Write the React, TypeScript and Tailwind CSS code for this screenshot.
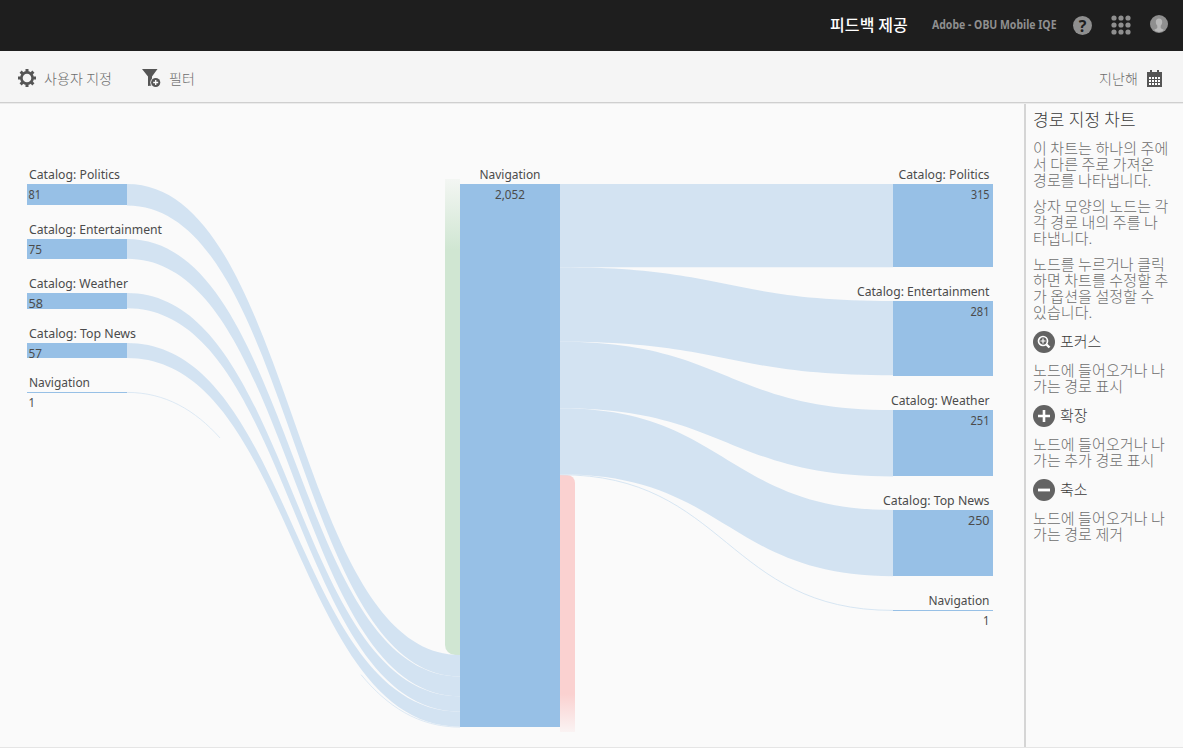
import React from 'react';

type Node = { label: string; value: string; x: number; y: number; h: number; box: number; lw: number; vw: number };

const K = 543 / 2052;
const left: Node[] = [
  { label: 'Catalog: Politics', value: '81', x: 27, y: 184, h: 81 * K, box: 21, lw: 91, vw: 12.500 },
  { label: 'Catalog: Entertainment', value: '75', x: 27, y: 239, h: 75 * K, box: 20, lw: 133, vw: 13.500 },
  { label: 'Catalog: Weather', value: '58', x: 27, y: 293, h: 58 * K, box: 16, lw: 99, vw: 14.500 },
  { label: 'Catalog: Top News', value: '57', x: 27, y: 343, h: 57 * K, box: 15, lw: 107, vw: 13.500 },
  { label: 'Navigation', value: '1', x: 27, y: 392, h: 1 * K, box: 1, lw: 61, vw: 6.500 },
];
const right: Node[] = [
  { label: 'Catalog: Politics', value: '315', x: 893, y: 184, h: 315 * K, box: 83, lw: 91, vw: 18.500 },
  { label: 'Catalog: Entertainment', value: '281', x: 893, y: 301, h: 281 * K, box: 75, lw: 132.500, vw: 19 },
  { label: 'Catalog: Weather', value: '251', x: 893, y: 410, h: 251 * K, box: 66, lw: 98.500, vw: 19 },
  { label: 'Catalog: Top News', value: '250', x: 893, y: 510, h: 250 * K, box: 66, lw: 106.500, vw: 21.500 },
  { label: 'Navigation', value: '1', x: 893, y: 610, h: 1 * K, box: 1, lw: 61, vw: 6.500 },
];

const LINK = '#d3e3f2';

// Ribbons keep a constant vertical thickness; the one-visit link is a hairline.
function links(nodes: Node[], start: number, toRight: boolean) {
  let y = start;
  return nodes.map((n) => {
    const cy = y;
    y += n.h;
    const [x0, y0, x1, y1] = toRight ? [560, cy, 893, n.y] : [127, n.y, 460, cy];
    const m = (x0 + x1) / 2;
    if (n.h < 1) {
      return (
        <path
          key={n.y}
          d={`M${x0},${y0 + 0.4}C${m},${y0 + 0.4} ${m},${y1 + 0.4} ${x1},${y1 + 0.4}`}
          fill="none"
          stroke={LINK}
          strokeWidth={toRight ? 0.9 : 0.75}
          strokeDasharray={toRight ? undefined : '107 276 300'}
        />
      );
    }
    return (
      <path
        key={n.y}
        fill={LINK}
        d={`M${x0},${y0}C${m},${y0} ${m},${y1} ${x1},${y1}V${y1 + n.h}C${m},${y1 + n.h} ${m},${y0 + n.h} ${x0},${y0 + n.h}Z`}
      />
    );
  });
}

function Chart() {
  return (
    <svg width="1024" height="643" viewBox="0 104 1024 643" className="block font-['Noto_Sans',sans-serif] text-[13px] font-normal">
      <defs>
        <linearGradient id="entry" gradientUnits="userSpaceOnUse" x1="0" y1="179" x2="0" y2="250">
          <stop offset="0" stopColor="#f3f6f3" />
          <stop offset="1" stopColor="#d0e6d2" />
        </linearGradient>
        <linearGradient id="exit" gradientUnits="userSpaceOnUse" x1="0" y1="694" x2="0" y2="732">
          <stop offset="0" stopColor="#fad1d0" />
          <stop offset="1" stopColor="#faf3f3" />
        </linearGradient>
      </defs>
      <path d="M445 179h15v476h-5a10 10 0 0 1-10-10z" fill="url(#entry)" />
      <path d="M560 475h7a8 8 0 0 1 8 8v249h-15z" fill="url(#exit)" />
      {links(left, 655, false)}
      {links(right, 184, true)}
      <rect x="460" y="184" width="100" height="543" fill="#97c0e6" />
      {[...left, ...right].map((n) => (
        <rect key={`${n.x}-${n.y}`} x={n.x} y={n.y} width="100" height={n.box} fill="#97c0e6" />
      ))}
      <g fill="#4b4b4b">
        {left.map((n) => (
          <React.Fragment key={n.y}>
            <text x="29" y={n.y - 5} textLength={n.lw} lengthAdjust="spacingAndGlyphs">{n.label}</text>
            <text x="28.5" y={n.y + 15} textLength={n.vw} lengthAdjust="spacingAndGlyphs">{n.value}</text>
          </React.Fragment>
        ))}
        {right.map((n) => (
          <React.Fragment key={n.y}>
            <text x={989.5 - n.lw} y={n.y - 5} textLength={n.lw} lengthAdjust="spacingAndGlyphs">{n.label}</text>
            <text x={989.5 - n.vw} y={n.y + 15} textLength={n.vw} lengthAdjust="spacingAndGlyphs">{n.value}</text>
          </React.Fragment>
        ))}
        <text x="479.5" y="179" textLength="61" lengthAdjust="spacingAndGlyphs">Navigation</text>
        <text x="495" y="199" textLength="30" lengthAdjust="spacingAndGlyphs">2,052</text>
      </g>
    </svg>
  );
}

function Gear() {
  return (
    <svg width="18" height="18" viewBox="0 0 18 18" fill="none" stroke="#555">
      <circle cx="9" cy="9" r="5.600" strokeWidth="2.600" />
      <g strokeWidth="3">
        <path d="M9 0v3M9 15v3M0 9h3M15 9h3M2.600 2.600l2.100 2.100M13.300 13.300l2.100 2.100M15.400 2.600l-2.100 2.100M4.700 13.300l-2.100 2.100" />
      </g>
    </svg>
  );
}

function Filter() {
  return (
    <svg width="19" height="19" viewBox="0 0 19 19">
      <path d="M0 0h15.500L10 7.500V16.500L6 17V7.500Z" fill="#555" />
      <circle cx="13.700" cy="13.500" r="5.400" fill="#f5f5f5" />
      <circle cx="13.700" cy="13.500" r="4.600" fill="#555" />
      <path d="M13.700 11v5M11.200 13.500h5" stroke="#fff" strokeWidth="1.300" />
    </svg>
  );
}

function Calendar() {
  return (
    <svg width="15" height="17" viewBox="0 0 15 17" shapeRendering="crispEdges">
      <path d="M0 2h3V0h2v2h5V0h2v2h3v15H0z" fill="#555" />
      {[7, 10, 13].map((y) =>
        [2, 5, 8, 11].map((x) => <rect key={`${x}-${y}`} x={x} y={y} width="2" height="2" fill="#fff" />),
      )}
    </svg>
  );
}

function Badge({ children }: { children: React.ReactNode }) {
  return (
    <svg width="22" height="22" viewBox="0 0 22 22" className="shrink-0" fill="none" stroke="#fff">
      <circle cx="11" cy="11" r="11" fill="#636363" stroke="none" />
      {children}
    </svg>
  );
}

function Lines({ lines }: { lines: string[] }) {
  return (
    <p className="text-[15px] leading-4 tracking-[0.1px] whitespace-nowrap text-[#6e6e6e]">
      {lines.map((l) => <span key={l} className="block">{l}</span>)}
    </p>
  );
}

function Action({ icon, title, lines }: { icon: React.ReactNode; title: string; lines: string[] }) {
  return (
    <section className="mt-[11px]">
      <h3 className="mb-[9px] flex h-[22px] items-center gap-[5px] text-[#3a3a3a]">
        <Badge>{icon}</Badge>
        <span className="mb-[2px] text-[15px] leading-[20px]">{title}</span>
      </h3>
      <Lines lines={lines} />
    </section>
  );
}

export default function App() {
  return (
    <div className="flex h-[748px] w-[1183px] flex-col overflow-hidden bg-[#fafafa] font-['Noto_Sans_CJK_KR',sans-serif] font-light">
      <header className="flex h-[51px] shrink-0 items-center justify-end bg-[#1e1e1e] pr-[15px] pb-[3px]">
        <span className="mr-[23px] text-[16px] font-medium tracking-[0.15px] text-white">피드백 제공</span>
        <svg width="125" height="20" className="mt-[2px] mr-[17px] overflow-visible font-['Noto_Sans',sans-serif] text-[11.500px] font-bold">
          <text x="1" y="14" fill="#8f8f8f" textLength="124.500" lengthAdjust="spacingAndGlyphs">Adobe - OBU Mobile IQE</text>
        </svg>
        <span className="mt-[3px] mr-[19px] flex size-[19px] items-center justify-center rounded-full bg-[#8f8f8f] font-['Open_Sans',sans-serif] text-[16px] leading-none font-bold text-[#1e1e1e]">?</span>
        <svg width="20" height="20" viewBox="0 0 20 20" className="mt-[2px] mr-[19px]" fill="#8f8f8f">
          {[3, 10, 17].map((y) => [3, 10, 17].map((x) => <circle key={`${x}-${y}`} cx={x} cy={y} r="2.600" />))}
        </svg>
        <svg width="18" height="18" viewBox="0 0 18 18">
          <circle cx="9" cy="9" r="9" fill="#8f8f8f" />
          <path d="M9 3.500c-2 0-3.200 1.500-3.200 3.500 0 1.700.8 2.800 1.500 3.700v2c-.4 1.300-2.300 1.500-3.300 2.400a8 8 0 0 0 10 0c-1-.9-2.900-1.100-3.300-2.400v-2c.7-.9 1.500-2 1.500-3.700 0-2-1.200-3.500-3.200-3.500z" fill="#b8b8b8" />
        </svg>
      </header>
      <div className="flex h-[52px] shrink-0 items-center border-b border-[#cfcfcf] bg-[#f5f5f5] pt-[3px] pr-[21px] pl-[18px] text-[14px] tracking-[0.1px] text-[#6e6e6e]">
        <Gear />
        <span className="ml-[8px]">사용자 지정</span>
        <span className="ml-[30px]"><Filter /></span>
        <span className="ml-[8px]">필터</span>
        <span className="mr-[9px] ml-auto">지난해</span>
        <Calendar />
      </div>
      <div className="flex h-[645px] border-t border-b border-t-[#ebebeb] border-b-[#e5e5e5]">
        <main className="w-[1024px] shrink-0"><Chart /></main>
        <aside className="w-[159px] border-l-2 border-[#d5d5d5] pt-[3px] pl-[7px]">
          <h2 className="mb-[9px] text-[17px] leading-6 tracking-[0.2px] text-[#3a3a3a]">경로 지정 차트</h2>
          <div className="flex flex-col gap-[10px]">
            <Lines lines={['이 차트는 하나의 주에', '서 다른 주로 가져온', '경로를 나타냅니다.']} />
            <Lines lines={['상자 모양의 노드는 각', '각 경로 내의 주를 나', '타냅니다.']} />
            <Lines lines={['노드를 누르거나 클릭', '하면 차트를 수정할 추', '가 옵션을 설정할 수', '있습니다.']} />
          </div>
          <Action
            title="포커스"
            lines={['노드에 들어오거나 나', '가는 경로 표시']}
            icon={<><circle cx="10" cy="10" r="4.500" strokeWidth="1.700" /><path d="M13.500 13.500l3 3" strokeWidth="2.400" /><path d="M10 7.500v5M7.500 10h5" strokeWidth="1.200" /></>}
          />
          <Action
            title="확장"
            lines={['노드에 들어오거나 나', '가는 추가 경로 표시']}
            icon={<path d="M11 5v12M5 11h12" strokeWidth="2.600" />}
          />
          <Action
            title="축소"
            lines={['노드에 들어오거나 나', '가는 경로 제거']}
            icon={<path d="M5 11h12" strokeWidth="2.800" />}
          />
        </aside>
      </div>
    </div>
  );
}
